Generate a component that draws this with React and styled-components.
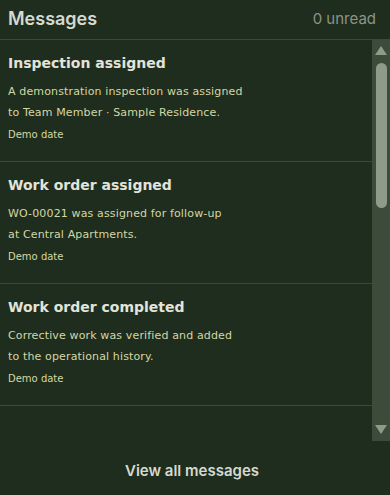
import React from "react";
import styled, { createGlobalStyle } from "styled-components";

const GlobalStyle = createGlobalStyle`
  html, body {
    margin: 0;
    padding: 0;
    background: #1f2d1f;
  }
  * {
    box-sizing: border-box;
  }
`;

const messages = [
  {
    title: "Inspection assigned",
    lines: ["A demonstration inspection was assigned", "to Team Member · Sample Residence."],
  },
  {
    title: "Work order assigned",
    lines: ["WO-00021 was assigned for follow-up", "at Central Apartments."],
  },
  {
    title: "Work order completed",
    lines: ["Corrective work was verified and added", "to the operational history."],
  },
];

function App() {
  return (
    <>
      <GlobalStyle />
      <Panel>
        <Header>
          <Heading>Messages</Heading>
          <Unread>0 unread</Unread>
        </Header>
        <ListArea>
          <List>
            {messages.map((m, i) => (
              <Item key={i}>
                <Title>{m.title}</Title>
                <Body>
                  {m.lines.map((l, j) => (
                    <React.Fragment key={j}>
                      {l}
                      {j < m.lines.length - 1 && <br />}
                    </React.Fragment>
                  ))}
                </Body>
                <DateText>Demo date</DateText>
              </Item>
            ))}
          </List>
          <Rail>
            <svg width="12" height="9" viewBox="0 0 12 9">
              <path d="M6 0 L12 9 L0 9 Z" fill="#8f9b89" />
            </svg>
            <Thumb />
            <RailSpacer />
            <svg width="12" height="9" viewBox="0 0 12 9">
              <path d="M0 0 L12 0 L6 9 Z" fill="#8f9b89" />
            </svg>
          </Rail>
        </ListArea>
        <Footer>
          <ViewAll>View all messages</ViewAll>
        </Footer>
      </Panel>
    </>
  );
}

const Panel = styled.div`
  width: 390px;
  height: 495px;
  display: flex;
  flex-direction: column;
  background: #1f2d1f;
  overflow: hidden;
`;

const Header = styled.div`
  height: 40px;
  flex-shrink: 0;
  display: flex;
  align-items: center;
  justify-content: space-between;
  padding: 0 14px 2px 8px;
  border-bottom: 1px solid #3b4b39;
`;

const Heading = styled.h2`
  margin: 0;
  font-family: Inter, "Liberation Sans", sans-serif;
  font-weight: 600;
  font-size: 18px;
  color: #d6d9cf;
`;

const Unread = styled.span`
  font-family: Inter, "Liberation Sans", sans-serif;
  font-size: 15px;
  color: #8a9585;
`;

const ListArea = styled.div`
  height: 401px;
  flex-shrink: 0;
  display: flex;
`;

const List = styled.div`
  flex: 1;
  overflow: hidden;
`;

const Rail = styled.div`
  width: 18px;
  flex-shrink: 0;
  display: flex;
  flex-direction: column;
  align-items: center;
  padding: 6px 0 7px;
  background: #3d4b3a;
`;

const Thumb = styled.div`
  width: 11px;
  height: 145px;
  margin-top: 8px;
  border-radius: 6px;
  background: #8f9b89;
`;

const RailSpacer = styled.div`
  flex: 1;
`;

const Item = styled.div`
  padding: 15px 8px 19px;
  border-bottom: 1px solid #3b4b39;
`;

const Title = styled.div`
  font-family: "DejaVu Sans", sans-serif;
  font-weight: bold;
  font-size: 14px;
  line-height: 17px;
  color: #e2e4da;
  margin-bottom: 9px;
`;

const Body = styled.div`
  font-family: "DejaVu Sans", sans-serif;
  font-size: 11px;
  line-height: 21px;
  letter-spacing: 0.14px;
  color: #d3d7a4;
`;

const DateText = styled.div`
  margin-top: 5px;
  font-family: "DejaVu Sans", sans-serif;
  font-size: 10px;
  line-height: 14px;
  color: #d3d7a4;
`;

const Footer = styled.div`
  flex: 1;
  display: flex;
  align-items: center;
  justify-content: center;
  padding: 4px 6px 0 0;
`;

const ViewAll = styled.button`
  background: none;
  border: none;
  padding: 0;
  cursor: pointer;
  font-family: Inter, "Liberation Sans", sans-serif;
  font-weight: 600;
  font-size: 15px;
  color: #d6d9cf;
`;

export default App;
